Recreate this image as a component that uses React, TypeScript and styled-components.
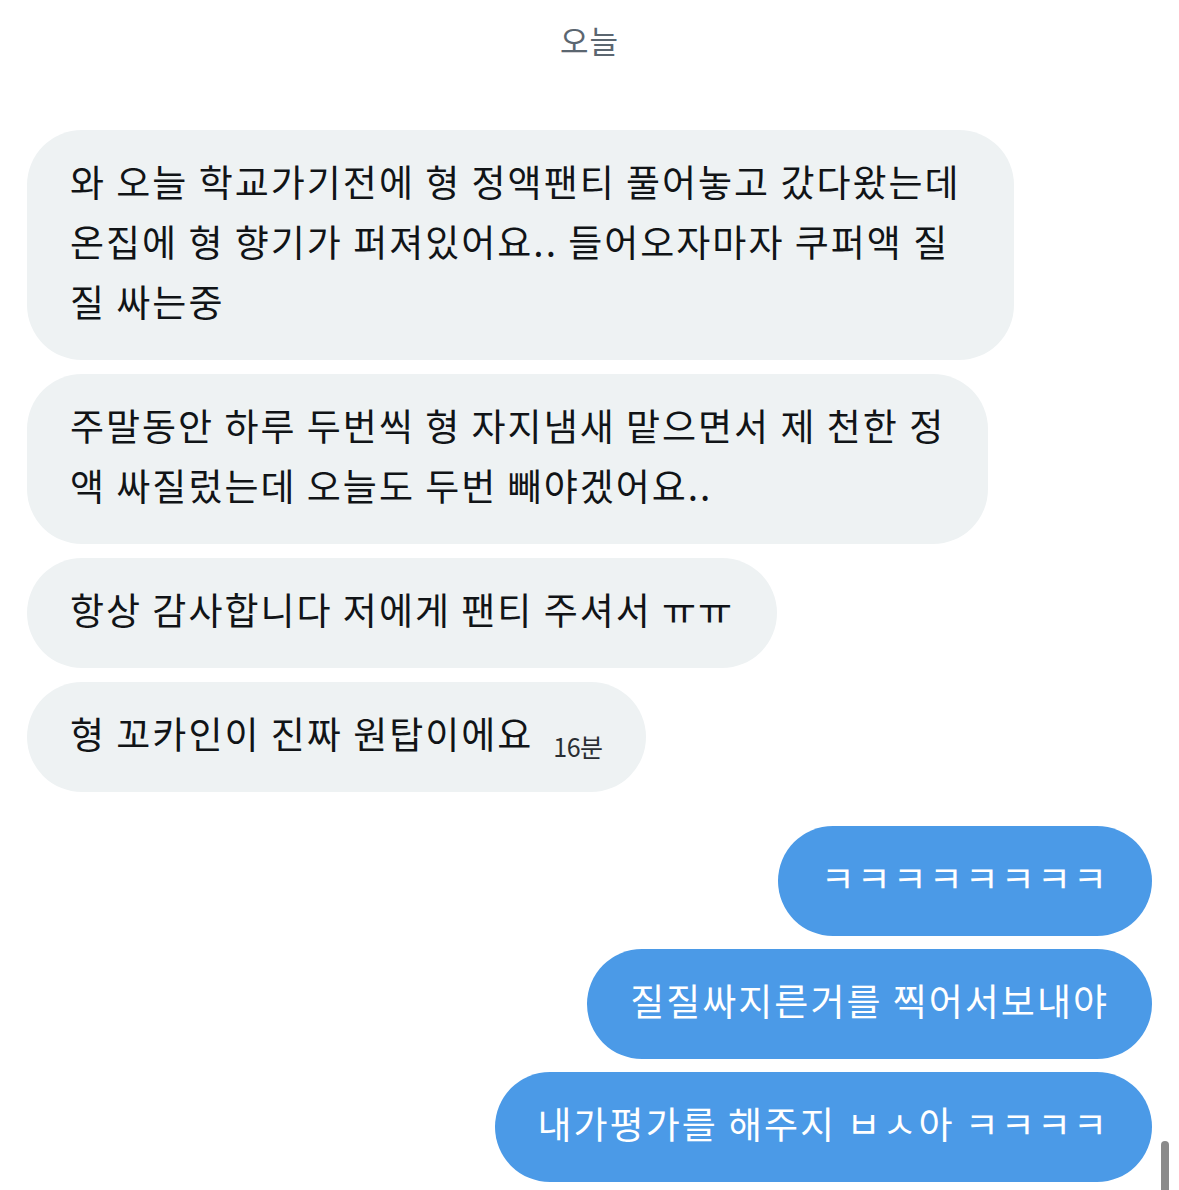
import { createGlobalStyle, styled } from 'styled-components';

const GlobalStyle = createGlobalStyle`
  body {
    margin: 0;
    background: #ffffff;
    font-family: "Noto Sans CJK KR", "Noto Sans", sans-serif;
  }
`;

const Screen = styled.div`
  position: relative;
  width: 1179px;
  height: 1190px;
  overflow: hidden;
  background: #ffffff;
`;

const DayLabel = styled.div`
  margin-top: 20px;
  height: 40px;
  line-height: 40px;
  text-align: center;
  font-size: 31px;
  letter-spacing: 1px;
  color: #5b6670;
`;

const Thread = styled.div`
  display: flex;
  flex-direction: column;
  gap: 14px;
  padding: 70px 27px 0;
`;

const Group = styled.div<{ $mine?: boolean }>`
  display: flex;
  flex-direction: column;
  align-items: ${(p) => (p.$mine ? 'flex-end' : 'flex-start')};
  gap: ${(p) => (p.$mine ? '13px' : '14px')};
  margin-top: ${(p) => (p.$mine ? '20px' : '0')};
`;

const Bubble = styled.div<{ $mine?: boolean }>`
  box-sizing: border-box;
  padding: 21px 43px 29px 43px;
  border-radius: 55px;
  font-size: 37px;
  line-height: 60px;
  letter-spacing: 2px;
  white-space: pre;
  background: ${(p) => (p.$mine ? '#4b9ae7' : '#eef2f3')};
  color: ${(p) => (p.$mine ? '#ffffff' : '#111417')};
`;

const Stamp = styled.span`
  display: inline-block;
  margin-left: 20px;
  font-size: 25px;
  line-height: 1;
  letter-spacing: -0.5px;
  color: #2a2e33;
  vertical-align: -8px;
`;

const ScrollThumb = styled.div`
  position: absolute;
  left: 1161px;
  top: 1141px;
  width: 8px;
  height: 80px;
  border-radius: 4px;
  background: #8a8a8a;
`;

const received = [
  '와 오늘 학교가기전에 형 정액팬티 풀어놓고 갔다왔는데 \n온집에 형 향기가 퍼져있어요.. 들어오자마자 쿠퍼액 질\n질 싸는중',
  '주말동안 하루 두번씩 형 자지냄새 맡으면서 제 천한 정\n액 싸질렀는데 오늘도 두번 빼야겠어요..',
  '항상 감사합니다 저에게 팬티 주셔서 ㅠㅠ',
];

const sent = [
  'ㅋㅋㅋㅋㅋㅋㅋㅋ',
  '질질싸지른거를 찍어서보내야',
  '내가평가를 해주지 ㅂㅅ아 ㅋㅋㅋㅋ',
];

export default function App() {
  return (
    <>
      <GlobalStyle />
      <Screen>
        <DayLabel>오늘</DayLabel>
        <Thread>
          <Group>
            {received.map((text) => (
              <Bubble key={text}>{text}</Bubble>
            ))}
            <Bubble>
              형 꼬카인이 진짜 원탑이에요
              <Stamp>16분</Stamp>
            </Bubble>
          </Group>
          <Group $mine>
            {sent.map((text) => (
              <Bubble $mine key={text}>
                {text}
              </Bubble>
            ))}
          </Group>
        </Thread>
        <ScrollThumb />
      </Screen>
    </>
  );
}
